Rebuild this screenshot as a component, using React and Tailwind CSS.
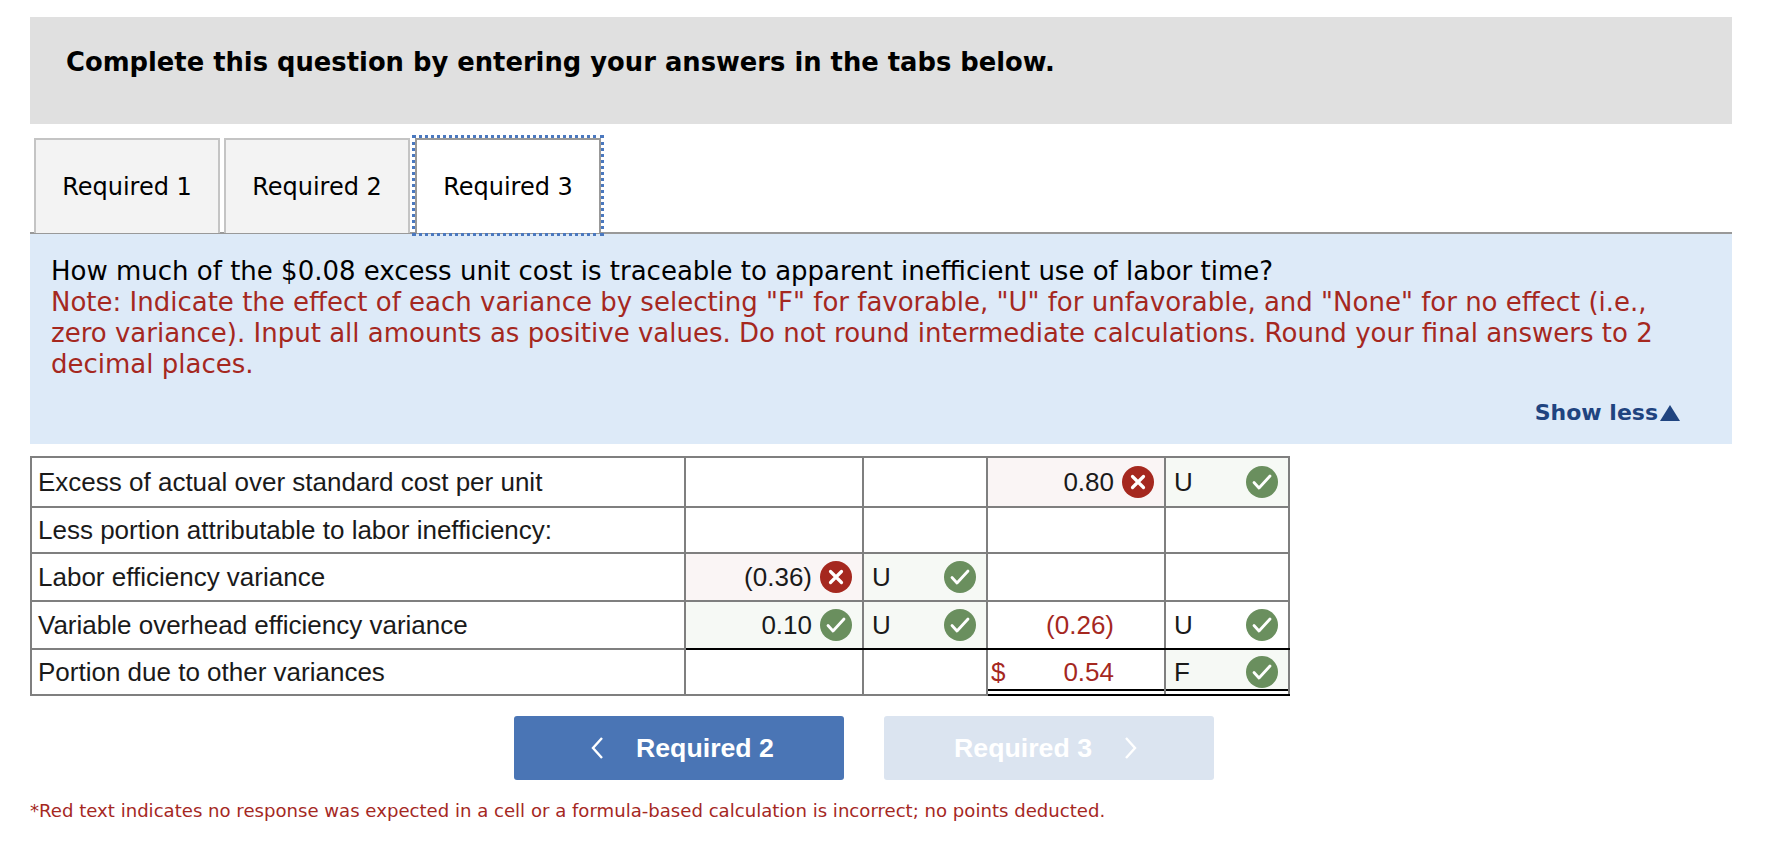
import React from "react";

const verdana = "font-['DejaVu_Sans',Verdana,sans-serif]";

const CheckIcon = () => (
  <svg width="32" height="32" viewBox="0 0 32 32" className="shrink-0">
    <circle cx="16" cy="16" r="16" fill="#6a8f5e" />
    <path d="M8 16.5l5 5.5 11-12" fill="none" stroke="#fff" strokeWidth="2.8" strokeLinecap="round" strokeLinejoin="round" />
  </svg>
);

const CrossIcon = () => (
  <svg width="32" height="32" viewBox="0 0 32 32" className="shrink-0">
    <circle cx="16" cy="16" r="16" fill="#a5281f" />
    <path d="M10.5 10.5l11 11M21.5 10.5l-11 11" fill="none" stroke="#fff" strokeWidth="3.2" strokeLinecap="round" />
  </svg>
);

const Label = ({ children }) => (
  <td className="border-2 border-[#7f7f7f] pl-[6px] text-left">{children}</td>
);

const Amount = ({ value, status, red, dollar, className = "" }) => {
  const bg = status === "bad" ? "bg-[#faf5f5]" : status === "ok" ? "bg-[#f6f9f5]" : "";
  return (
    <td className={`border-2 border-[#7f7f7f] ${bg} ${className}`}>
      <div className={`flex items-center justify-between pl-[3px] pr-[10px] ${red ? "text-[#a5281f]" : ""}`}>
        <span>{dollar ? "$" : ""}</span>
        <div className="flex items-center gap-[8px]">
          <span>{value}</span>
          {status === "bad" && <CrossIcon />}
          {status === "ok" && <CheckIcon />}
          {!status && <span className="w-[32px]" />}
        </div>
      </div>
    </td>
  );
};

const Unit = ({ value, className = "" }) => (
  <td className={`border-2 border-[#7f7f7f] bg-[#f6f9f5] ${className}`}>
    <div className="flex items-center justify-between pl-[8px] pr-[10px]">
      <span>{value}</span>
      <CheckIcon />
    </div>
  </td>
);

const Empty = ({ className = "" }) => <td className={`border-2 border-[#7f7f7f] ${className}`} />;

const App = () => {
  return (
    <div className="min-h-[864px] bg-white px-[30px] pt-[17px] text-black">
      <div className={`h-[107px] w-[1702px] bg-[#e0e0e0] pl-[36px] pt-[29px] ${verdana} text-[25.8px] font-bold leading-[32px]`}>
        Complete this question by entering your answers in the tabs below.
      </div>

      <div className={`mt-[14px] flex h-[96px] w-[1702px] gap-[4px] border-b-2 border-[#999999] pl-[4px] ${verdana} text-[24px]`}>
        <div className="flex h-[95px] w-[186px] items-center justify-center border-2 border-b-0 border-[#c4c4c4] bg-[#f3f3f3] pt-[1px]">Required 1</div>
        <div className="flex h-[95px] w-[186px] items-center justify-center border-2 border-b-0 border-[#c4c4c4] bg-[#f3f3f3] pt-[1px]">Required 2</div>
        <div className="ml-[1px] flex h-[95px] w-[186px] items-center justify-center border-2 border-b-0 border-[#999999] bg-white pt-[1px] outline-3 outline-offset-0 outline-dotted outline-[#4a78bf]">Required 3</div>
      </div>

      <div className={`h-[210px] w-[1702px] bg-[#ddeaf8] px-[21px] pt-[22px] ${verdana} text-[26px] leading-[31px]`}>
        <div>How much of the $0.08 excess unit cost is traceable to apparent inefficient use of labor time?</div>
        <div className="max-w-[1640px] text-[#a5281f]">
          Note: Indicate the effect of each variance by selecting "F" for favorable, "U" for unfavorable, and "None" for no effect (i.e., zero variance). Input all amounts as positive values. Do not round intermediate calculations. Round your final answers to 2 decimal places.
        </div>
        <div className="mt-[17px] flex items-center justify-end gap-[2px] pr-[31px] text-[22px] font-bold leading-[31px] text-[#1f4480]">
          Show less
          <svg width="20" height="16" viewBox="0 0 20 16">
            <path d="M10 0l10 16H0z" fill="#1f4480" />
          </svg>
        </div>
      </div>

      <table className="mt-[12px] w-[1258px] table-fixed border-collapse font-['Liberation_Sans',Arial,sans-serif] text-[26px] text-[#1a1a1a]">
        <colgroup>
          <col className="w-[654px]" />
          <col className="w-[178px]" />
          <col className="w-[124px]" />
          <col className="w-[178px]" />
          <col className="w-[124px]" />
        </colgroup>
        <tbody>
          <tr className="h-[50px]">
            <Label>Excess of actual over standard cost per unit</Label>
            <Empty />
            <Empty />
            <Amount value="0.80" status="bad" />
            <Unit value="U" />
          </tr>
          <tr className="h-[46px]">
            <Label>Less portion attributable to labor inefficiency:</Label>
            <Empty />
            <Empty />
            <Empty />
            <Empty />
          </tr>
          <tr className="h-[48px]">
            <Label>Labor efficiency variance</Label>
            <Amount value="(0.36)" status="bad" />
            <Unit value="U" />
            <Empty />
            <Empty />
          </tr>
          <tr className="h-[48px]">
            <Label>Variable overhead efficiency variance</Label>
            <Amount value="0.10" status="ok" className="border-b-black" />
            <Unit value="U" className="border-b-black" />
            <Amount value="(0.26)" red className="border-b-black" />
            <Unit value="U" className="border-b-black bg-white" />
          </tr>
          <tr className="h-[46px]">
            <Label>Portion due to other variances</Label>
            <Empty className="border-t-black" />
            <Empty className="border-t-black" />
            <Amount value="0.54" red dollar className="border-t-black border-b-black shadow-[inset_0_-3px_0_#fff,inset_0_-5px_0_#000]" />
            <Unit value="F" className="border-t-black border-b-black shadow-[inset_0_-3px_0_#fff,inset_0_-5px_0_#000]" />
          </tr>
        </tbody>
      </table>

      <div className="ml-[484px] mt-[20px] flex w-[700px] gap-[40px] font-['Liberation_Sans',Arial,sans-serif] text-[26.7px] font-bold text-white">
        <div className="flex h-[64px] w-[330px] items-center justify-start gap-[32px] rounded-[3px] bg-[#4a75b5] pl-[76px]">
          <svg width="14" height="24" viewBox="0 0 14 24">
            <path d="M12 2L3 12l9 10" fill="none" stroke="#fff" strokeWidth="2.4" />
          </svg>
          <span>Required 2</span>
        </div>
        <div className="flex h-[64px] w-[330px] items-center justify-end gap-[32px] rounded-[3px] bg-[#dbe4f0] pr-[76px]">
          <span>Required 3</span>
          <svg width="14" height="24" viewBox="0 0 14 24">
            <path d="M2 2l9 10-9 10" fill="none" stroke="#fff" strokeWidth="2.4" />
          </svg>
        </div>
      </div>

      <div className={`mt-[18px] ${verdana} text-[18.1px] leading-[26px] text-[#a5281f]`}>
        *Red text indicates no response was expected in a cell or a formula-based calculation is incorrect; no points deducted.
      </div>
    </div>
  );
};

export default App;
